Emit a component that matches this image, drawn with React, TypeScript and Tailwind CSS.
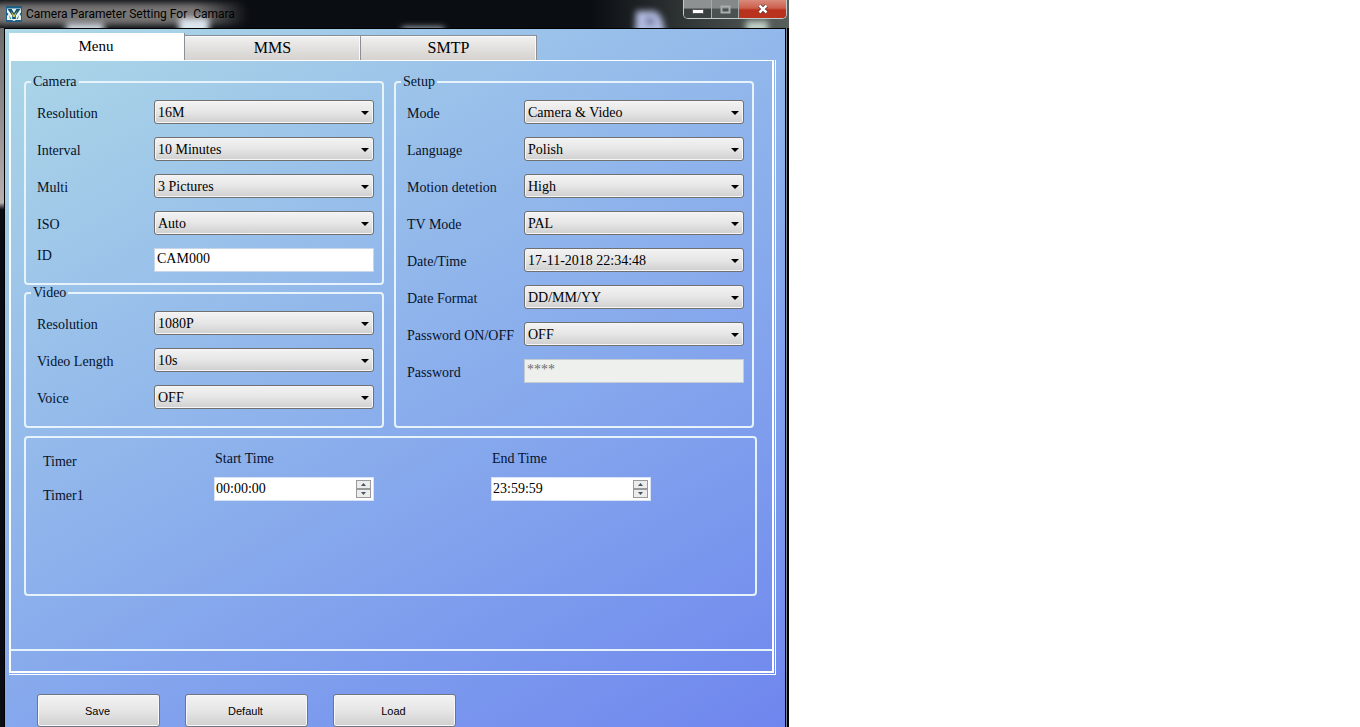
import { ReactNode, useState } from "react";

const serif = "font-['Liberation_Serif',serif]";

function Group({ title, className, children }: { title: string; className: string; children: ReactNode }) {
  return (
    <fieldset className={`min-w-0 rounded border-2 border-[#e6f3fb] pl-[11px] pr-2 pt-[10px] ${className}`}>
      <legend className="-ml-[6px] h-4 px-[2px] leading-4">{title}</legend>
      <div className="flex flex-col gap-[13px]">{children}</div>
    </fieldset>
  );
}

function SelectRow({ id, label, options }: { id: string; label: string; options: string[] }) {
  return (
    <div className="grid grid-cols-[117px_1fr] items-center">
      <label htmlFor={id} className="whitespace-nowrap pt-1 leading-5">{label}</label>
      <div className="relative min-w-0">
        <select
          id={id}
          className="block h-6 w-full appearance-none rounded-[3px] border border-[#707070] bg-linear-to-b from-[#f3f3f3] via-[#e6e6e6] to-[#cfcfcf] pt-px pl-[3px] pr-5 leading-5 text-black shadow-[inset_0_0_0_1px_#f6f6f6]"
        >
          {options.map((o) => (
            <option key={o}>{o}</option>
          ))}
        </select>
        <svg viewBox="0 0 8 4" className="pointer-events-none absolute right-[5px] top-[11px] h-1 w-2" aria-hidden="true">
          <path d="M0 0h8L4 4z" fill="#000" />
        </svg>
      </div>
    </div>
  );
}

function TimeField({ id, label, initial }: { id: string; label: string; initial: string }) {
  const [value, setValue] = useState(initial);
  const step = (delta: number) => {
    const [h, m, s] = value.split(":").map(Number);
    const total = (h * 3600 + m * 60 + s + delta + 86400) % 86400;
    const parts = [Math.floor(total / 3600), Math.floor(total / 60) % 60, total % 60];
    setValue(parts.map((p) => String(p).padStart(2, "0")).join(":"));
  };
  const btn = "flex h-[9px] w-[15px] items-center justify-center border border-[#9a9a9a] bg-[#ececec]";
  return (
    <div className="flex flex-col gap-[10px]">
      <label htmlFor={id} className="pl-px leading-4">{label}</label>
      <div className="flex h-6 w-40 items-center border border-[#d9e2f4] bg-white pr-[2px]">
        <input
          id={id}
          value={value}
          onChange={(e) => setValue(e.target.value)}
          className="h-full min-w-0 flex-1 bg-transparent pl-px leading-5 text-black outline-none"
        />
        <div className="flex flex-col">
          <button type="button" aria-label={`${label} up`} onClick={() => step(1)} className={btn}>
            <svg viewBox="0 0 5 3" className="h-[3px] w-[5px]" aria-hidden="true"><path d="M0 3h5L2.5 0z" fill="#445566" /></svg>
          </button>
          <button type="button" aria-label={`${label} down`} onClick={() => step(-1)} className={btn}>
            <svg viewBox="0 0 5 3" className="h-[3px] w-[5px]" aria-hidden="true"><path d="M0 0h5L2.5 3z" fill="#445566" /></svg>
          </button>
        </div>
      </div>
    </div>
  );
}

function TitleBar() {
  return (
    <header className="relative flex h-7 items-start justify-between overflow-hidden bg-[#0a0d12]">
      <svg className="absolute inset-0 h-full w-full" viewBox="0 0 789 28" preserveAspectRatio="none" aria-hidden="true">
        <defs>
          <linearGradient id="glow" x1="0" x2="1" y1="0" y2="0">
            <stop offset="0" stopColor="#777473" />
            <stop offset="0.8" stopColor="#777473" />
            <stop offset="1" stopColor="#777473" stopOpacity="0" />
          </linearGradient>
          <linearGradient id="glass" x1="0" x2="1" y1="0" y2="0">
            <stop offset="0" stopColor="#59605c" stopOpacity="0" />
            <stop offset="1" stopColor="#59605c" />
          </linearGradient>
          <filter id="soft" filterUnits="userSpaceOnUse" x="-40" y="-30" width="880" height="100">
            <feGaussianBlur stdDeviation="3" />
          </filter>
        </defs>
        <rect x="-10" y="3" width="258" height="22" rx="10" fill="url(#glow)" filter="url(#soft)" />
        <rect x="590" y="0" width="199" height="28" fill="url(#glass)" />
        <g filter="url(#soft)">
          <rect x="66" y="23" width="38" height="14" fill="#d4dae2" />
          <rect x="179" y="18" width="30" height="20" fill="#dde5ee" />
          <rect x="402" y="27" width="42" height="9" fill="#aab4bd" />
          <path d="M636 11h18q10 3 11 25h-30z" fill="#b3bde2" />
          <path d="M646 17h5q4 2 4 8h-9z" fill="#6a7394" />
          <rect x="746" y="21" width="22" height="14" fill="#c3d3c7" />
        </g>
      </svg>
      <div className="relative flex h-7 items-center gap-1 pl-[6px]">
        <svg viewBox="0 0 16 16" className="h-4 w-4" aria-hidden="true">
          <rect width="16" height="16" fill="#1d5f86" />
          <path d="M1 2.500h14v4L13.500 8l1.500 2v4H10l-2 1-2-1H1v-4l1.500-2L1 6.500z" fill="#e9f6f4" />
          <path d="M1.500 3h4.200L8 7l2.300-4h4.200L9.800 9.600V13H6.200V9.600z" fill="#17506f" />
          <path d="M6.300 3h3.400L8 6z" fill="#e9f6f4" />
          <path d="M5 5l3 4 3-4-2.200 6H7.200z" fill="#d8c94a" />
          <path d="M3 9l2.500 4H4zM13 9l-2.500 4H12z" fill="#2d8a8a" />
        </svg>
        <h1 className="whitespace-pre font-[Roboto,sans-serif] text-xs leading-4 text-black">Camera Parameter Setting For  Camara</h1>
      </div>
      <div className="relative mr-[2px] flex h-[19px] overflow-hidden rounded-b-[5px] border border-t-0 border-[#c3c8c8]">
        <button type="button" aria-label="Minimize" className="flex w-7 items-center justify-center border-r border-[#a5aaaa] bg-linear-to-b from-[#8d9191] from-45% to-[#3b4040] to-50%">
          <svg viewBox="0 0 12 5" className="mt-1 h-[5px] w-3" aria-hidden="true"><rect x="0.500" y="0.500" width="11" height="4" rx="1" fill="#fff" stroke="#555" /></svg>
        </button>
        <button type="button" aria-label="Maximize" className="flex w-[27px] items-center justify-center border-r border-[#a5aaaa] bg-linear-to-b from-[#858989] from-45% to-[#4b5050] to-50%">
          <svg viewBox="0 0 11 9" className="h-[9px] w-[11px]" aria-hidden="true"><rect x="1.500" y="1.500" width="8" height="6" fill="none" stroke="#a9adad" strokeWidth="2" /></svg>
        </button>
        <button type="button" aria-label="Close" className="flex w-[47px] items-center justify-center bg-linear-to-b from-[#d98a7c] from-0% via-[#cc5f4c] via-45% to-[#b8321d] to-55%">
          <svg viewBox="0 0 12 10" className="h-[10px] w-3" aria-hidden="true">
            <path d="M2.500 1.500l7 7M9.500 1.500l-7 7" stroke="#5a2a26" strokeWidth="4" />
            <path d="M2.500 1.500l7 7M9.500 1.500l-7 7" stroke="#fff" strokeWidth="2.500" />
          </svg>
        </button>
      </div>
    </header>
  );
}

const tabs = ["Menu", "MMS", "SMTP"];

export default function App() {
  const [tab, setTab] = useState("Menu");
  return (
    <div className="min-h-screen bg-white">
      <main className={`flex min-h-screen w-full max-w-[789px] flex-col bg-[#05070a] text-sm text-[#06122b] ${serif}`}>
        <TitleBar />
        <div className="flex flex-1">
          <div className="w-1 bg-linear-to-b from-[#6b6b6e] from-0% via-[#b9b0b0] via-25% to-[#0a0d14] to-26%" />
          <div className="flex min-w-0 flex-1 flex-col border-x border-t border-black bg-linear-150 from-[#add8e6] to-[#6f86ee] pl-1 pr-[9px] pt-1">
            <div role="tablist" className="flex items-end leading-5 text-black">
              {tabs.map((t) => (
                <button
                  key={t}
                  type="button"
                  role="tab"
                  aria-selected={t === tab}
                  onClick={() => setTab(t)}
                  className={
                    t === tab
                      ? "h-[27px] w-44 border-r border-[#8b9096] bg-white pb-px pr-px text-[15px]"
                      : "h-[25px] w-44 border-r border-t border-[#8b8f94] bg-linear-to-b from-[#f1f1f1] to-[#d5d2cf] text-base leading-5 shadow-[inset_-1px_1px_0_#fafafa]"
                  }
                >
                  {t}
                </button>
              ))}
            </div>
            <div className="border-b border-r border-white pb-px pr-px">
              <div className="border-2 border-t border-white">
                <div className="border-b-2 border-[#e6f3fb] pb-[53px] pl-[13px] pr-[15px] pt-[13px]">
                  <div className="grid grid-cols-2 gap-[10px] pr-[3px]">
                    <div className="flex min-w-0 flex-col">
                      <Group title="Camera" className="pb-[11px]">
                        <SelectRow id="cam-res" label="Resolution" options={["16M", "12M", "8M"]} />
                        <SelectRow id="interval" label="Interval" options={["10 Minutes", "5 Minutes", "1 Minute"]} />
                        <SelectRow id="multi" label="Multi" options={["3 Pictures", "2 Pictures", "1 Picture"]} />
                        <SelectRow id="iso" label="ISO" options={["Auto", "100", "200"]} />
                        <div className="grid grid-cols-[117px_1fr] items-start">
                          <label htmlFor="cam-id" className="leading-4">ID</label>
                          <input id="cam-id" defaultValue="CAM000" className="h-6 w-full min-w-0 border border-[#c9d6ea] bg-white pb-[2px] pl-[2px] leading-5 text-black" />
                        </div>
                      </Group>
                      <Group title="Video" className="pb-[17px]">
                        <SelectRow id="vid-res" label="Resolution" options={["1080P", "720P", "VGA"]} />
                        <SelectRow id="vid-len" label="Video Length" options={["10s", "20s", "30s"]} />
                        <SelectRow id="voice" label="Voice" options={["OFF", "ON"]} />
                      </Group>
                    </div>
                    <Group title="Setup" className="pb-[17px]">
                      <SelectRow id="mode" label="Mode" options={["Camera & Video", "Camera", "Video"]} />
                      <SelectRow id="lang" label="Language" options={["Polish", "English", "German"]} />
                      <SelectRow id="motion" label="Motion detetion" options={["High", "Middle", "Low"]} />
                      <SelectRow id="tv" label="TV Mode" options={["PAL", "NTSC"]} />
                      <SelectRow id="datetime" label="Date/Time" options={["17-11-2018 22:34:48"]} />
                      <SelectRow id="datefmt" label="Date Format" options={["DD/MM/YY", "MM/DD/YY", "YY/MM/DD"]} />
                      <SelectRow id="pw-on" label="Password ON/OFF" options={["OFF", "ON"]} />
                      <div className="grid grid-cols-[117px_1fr] items-center">
                        <label htmlFor="pw" className="pt-1 leading-5">Password</label>
                        <input id="pw" disabled defaultValue="****" className="h-6 w-full min-w-0 border border-[#c4cbd2] bg-[#eef0ee] pb-[2px] pl-[2px] leading-5 text-[#6d6d6d]" />
                      </div>
                    </Group>
                  </div>
                  <section aria-label="Timer" className="mt-2 flex min-h-40 rounded border-2 border-[#e6f3fb] pl-[17px] pt-[13px]">
                    <div className="flex w-[171px] flex-col gap-[18px] pt-[3px] leading-4">
                      <span>Timer</span>
                      <span>Timer1</span>
                    </div>
                    <div className="flex gap-[117px]">
                      <TimeField id="start" label="Start Time" initial="00:00:00" />
                      <TimeField id="end" label="End Time" initial="23:59:59" />
                    </div>
                  </section>
                </div>
                <div className="h-5" />
              </div>
            </div>
            <div className="mt-[19px] flex gap-[25px] pl-7">
              {["Save", "Default", "Load"].map((b) => (
                <button
                  key={b}
                  type="button"
                  className="h-[33px] w-[123px] rounded-[3px] border border-[#707680] bg-linear-to-b from-[#f2f2f2] from-0% via-[#e6e6e6] via-50% to-[#cfcfcf] pr-[2px] font-['Liberation_Sans',sans-serif] text-[11px] leading-4 text-black shadow-[inset_0_0_0_1px_#f8f8f8]"
                >
                  {b}
                </button>
              ))}
            </div>
          </div>
          <div className="w-[3px] border-l border-[#7c8589] bg-black" />
        </div>
      </main>
    </div>
  );
}
